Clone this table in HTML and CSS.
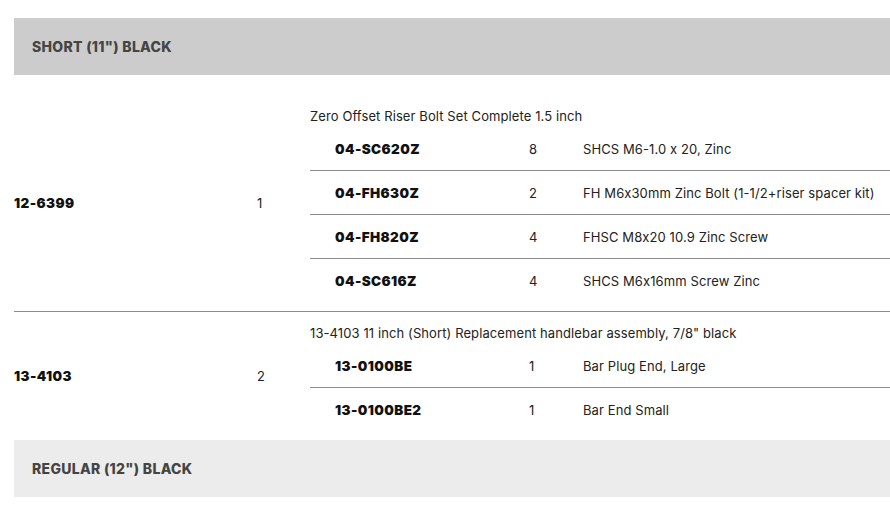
FILE: index.html
```html
<!DOCTYPE html>
<html>
<head>
<meta charset="utf-8">
<link rel="stylesheet" href="styles.css">
</head>
<body>
<div class="page">
  <div class="group-head dark">SHORT (11") BLACK</div>
  <div class="rows first">
    <div class="row">
      <div class="part">12-6399</div>
      <div class="qty">1</div>
      <div class="detail">
        <div class="desc">Zero Offset Riser Bolt Set Complete 1.5 inch</div>
        <div class="sub">
          <div class="subrow"><div class="spart">04-SC620Z</div><div class="sqty">8</div><div class="sdesc">SHCS M6-1.0 x 20, Zinc</div></div>
          <div class="subrow"><div class="spart">04-FH630Z</div><div class="sqty">2</div><div class="sdesc">FH M6x30mm Zinc Bolt (1-1/2+riser spacer kit)</div></div>
          <div class="subrow"><div class="spart">04-FH820Z</div><div class="sqty">4</div><div class="sdesc">FHSC M8x20 10.9 Zinc Screw</div></div>
          <div class="subrow"><div class="spart">04-SC616Z</div><div class="sqty">4</div><div class="sdesc">SHCS M6x16mm Screw Zinc</div></div>
        </div>
      </div>
    </div>
    <div class="row">
      <div class="part">13-4103</div>
      <div class="qty">2</div>
      <div class="detail">
        <div class="desc">13-4103 11 inch (Short) Replacement handlebar assembly, 7/8" black</div>
        <div class="sub">
          <div class="subrow"><div class="spart">13-0100BE</div><div class="sqty">1</div><div class="sdesc">Bar Plug End, Large</div></div>
          <div class="subrow"><div class="spart">13-0100BE2</div><div class="sqty">1</div><div class="sdesc">Bar End Small</div></div>
        </div>
      </div>
    </div>
  </div>
  <div class="group-head light">REGULAR (12") BLACK</div>
</div>
</body>
</html>
```

FILE: styles.css
```css
html, body {
  margin: 0;
  padding: 0;
  background: #fff;
}
body {
  font-family: Inter, "Noto Sans", sans-serif;
  color: #222;
  font-size: 13px;
  font-feature-settings: "calt" 0;
}
.page {
  padding: 18px 0 0 14px;
  overflow: hidden;
}
.group-head {
  height: 57px;
  display: flex;
  align-items: center;
  padding-left: 18px;
  font-weight: 800;
  font-size: 14px;
  color: #444;
  letter-spacing: 0.3px;
}
.group-head.dark {
  background: #cccccc;
  margin-bottom: 20px;
}
.group-head.light {
  background: #ececec;
}
.row {
  display: grid;
  grid-template-columns: 243px 53px 1fr;
  align-items: center;
}
.row + .row {
  border-top: 1px solid #8c8c8c;
}
.part, .spart {
  font-weight: 900;
  color: #111;
  font-size: 13.5px;
  letter-spacing: 0.4px;
}
.detail {
  padding: 10px 0 9px;
}
.desc {
  line-height: 22px;
}
.desc, .sdesc, .qty, .sqty {
  letter-spacing: 0.1px;
}
.subrow {
  display: grid;
  grid-template-columns: 219px 54px 1fr;
  align-items: center;
  height: 43px;
}
.subrow + .subrow {
  border-top: 1px solid #8c8c8c;
}
.spart {
  padding-left: 25px;
}
```
